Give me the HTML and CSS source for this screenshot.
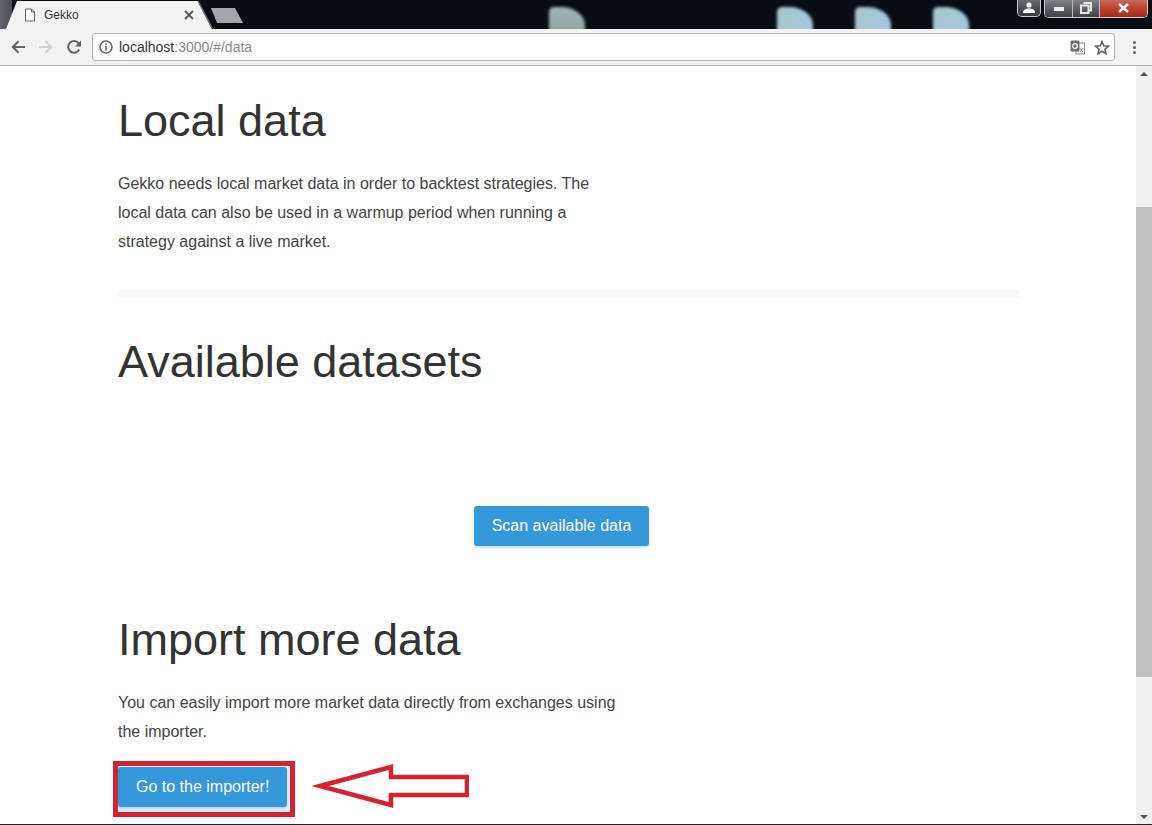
FILE: index.html
```html
<!DOCTYPE html>
<html lang="en">
<head>
<meta charset="utf-8">
<title>Gekko</title>
<link rel="stylesheet" href="styles.css">
</head>
<body>
<div class="browser">
  <header class="tabstrip">
    <div class="tab">
      <svg class="tab-shape" width="236" height="29" viewBox="0 0 236 29"><path d="M0 29H6L17 1H198L212 29Z" fill="#f2f2f2"/><path d="M198 1L212 28" stroke="#6d7175" stroke-width="1.5" fill="none"/></svg>
      <svg class="page-icon" width="12" height="14" viewBox="0 0 12 14"><path d="M1.500 1H7.500L10.500 4V13H1.500Z M7.500 1V4H10.500" fill="#fff" stroke="#5f6368" stroke-width="1"/></svg>
      <span class="tab-title">Gekko</span>
      <svg class="tab-close" width="10" height="10" viewBox="0 0 10 10"><path d="M1 1L9 9M9 1L1 9" stroke="#555" stroke-width="1.800"/></svg>
    </div>
    <svg class="newtab" width="34" height="16" viewBox="0 0 34 16"><path d="M0 0H24L32 15H6Z" fill="#a3a6a9"/></svg>
    <div class="blobs">
      <span class="blob blob-a"></span><span class="blob"></span><span class="blob"></span><span class="blob"></span>
    </div>
    <div class="winbtns">
      <div class="winbtn user"><svg width="14" height="11" viewBox="0 0 14 11"><circle cx="7" cy="3" r="2.600" fill="#fff"/><path d="M1 11C1 7.500 4 6.500 7 6.500S13 7.500 13 11Z" fill="#fff"/></svg></div>
      <div class="winctl">
        <div class="winbtn min"><span class="min-bar"></span></div>
        <div class="winbtn max"><svg width="12" height="12" viewBox="0 0 12 12"><path d="M3.500 1H11V8.500H8.500M1 3.500H8.500V11H1Z" fill="none" stroke="#e8e8e8" stroke-width="2"/></svg></div>
        <div class="winbtn close"><svg width="13" height="10" viewBox="0 0 13 10"><path d="M2 1L11 9M11 1L2 9" stroke="#fff" stroke-width="2.600"/></svg></div>
      </div>
    </div>
  </header>
  <nav class="toolbar">
    <svg class="nav-icon" width="14" height="14" viewBox="0 0 14 14"><path d="M14 7H2M7.500 1.300L1.800 7L7.500 12.700" fill="none" stroke="#5f6368" stroke-width="2"/></svg>
    <svg class="nav-icon" width="14" height="14" viewBox="0 0 14 14"><path d="M0 7H12M6.500 1.300L12.200 7L6.500 12.700" fill="none" stroke="#cfd1d3" stroke-width="2"/></svg>
    <svg class="nav-icon" width="14" height="14" viewBox="0 0 14 14"><path d="M12.300 9.300A5.800 5.800 0 1 1 11.800 3.600" fill="none" stroke="#5f6368" stroke-width="2"/><path d="M14 0.500V6.500H8Z" fill="#5f6368"/></svg>
    <div class="omnibox">
      <svg width="14" height="14" viewBox="0 0 14 14"><circle cx="7" cy="7" r="6" fill="none" stroke="#5f6368" stroke-width="1.500"/><rect x="6.200" y="6" width="1.600" height="4.500" fill="#5f6368"/><rect x="6.200" y="3.300" width="1.600" height="1.600" fill="#5f6368"/></svg>
      <span class="url"><span class="host">localhost</span>:3000/#/data</span>
      <svg class="translate" width="15" height="15" viewBox="0 0 15 15"><rect x="6" y="3" width="8.500" height="11" fill="#fff" stroke="#8a8a8a"/><rect x="0.500" y="0.500" width="9" height="11" rx="1" fill="#6b6f72"/><circle cx="5" cy="6" r="2.300" fill="none" stroke="#fff" stroke-width="1.200"/><path d="M9.500 8L13 12M13 8L10 12" stroke="#8a8a8a"/></svg>
      <svg class="star" width="16" height="15" viewBox="0 0 16 15"><path d="M8 1.500L9.800 5.800L14.500 6.200L11 9.200L12 13.700L8 11.300L4 13.700L5 9.200L1.500 6.200L6.200 5.800Z" fill="none" stroke="#5f6368" stroke-width="1.600"/></svg>
    </div>
    <div class="menu-dots"><i></i><i></i><i></i></div>
  </nav>
  <div class="viewport">
    <main class="page">
      <h1>Local data</h1>
      <p>Gekko needs local market data in order to backtest strategies. The local data can also be used in a warmup period when running a strategy against a live market.</p>
      <div class="rule"></div>
      <h1 class="datasets">Available datasets</h1>
      <div class="scan-row"><a class="btn">Scan available data</a></div>
      <h1 class="import">Import more data</h1>
      <p class="import-text">You can easily import more market data directly from exchanges using the importer.</p>
      <div class="importer-row">
        <div class="highlight"><a class="btn">Go to the importer!</a></div>
        <svg class="arrow" width="158" height="46" viewBox="0 0 158 46"><path d="M9 23L80 4V14H156V32H80V42Z" fill="#fff" stroke="#d3232e" stroke-width="4.500"/></svg>
      </div>
    </main>
    <aside class="scrollbar">
      <span class="arrow-up"></span>
      <div class="thumb-track"><div class="thumb"></div></div>
      <span class="arrow-down"></span>
    </aside>
  </div>
  <div class="bottom-line"></div>
</div>
</body>
</html>
```
FILE: styles.css
```css
* { box-sizing: border-box; }
html, body { margin: 0; height: 100%; overflow: hidden; }
body { font-family: "Liberation Sans", Arial, sans-serif; background: #fff; color: #333; }
.browser { width: 1152px; height: 825px; display: flex; flex-direction: column; }

.tabstrip { height: 29px; flex: none; background: #080d14; display: flex; position: relative; overflow: hidden; }
.tab { width: 211px; height: 29px; position: relative; flex: none; background: linear-gradient(90deg, #64686c 0, #4a4d52 12px, transparent 12px); display: flex; align-items: center; }
.tab-shape { position: absolute; left: 0; top: 0; }
.page-icon { position: relative; margin-left: 24px; margin-top: 1px; }
.tab-title { position: relative; font-size: 12px; color: #333; margin-left: 8px; }
.tab-close { position: relative; margin-left: 105px; }
.newtab { margin-top: 8px; flex: none; }
.blobs { display: flex; position: absolute; left: 549px; top: 7px; }
.blob { width: 36px; height: 30px; background: linear-gradient(135deg, #a9c7c4, #a2c6e8); border-radius: 5px 24px 0 0 / 5px 18px 0 0; filter: blur(1.500px); margin-right: 42px; }
.blob-a { background: linear-gradient(#9fb5b4, #8ea39f); margin-right: 192px; }
.winbtns { position: absolute; right: 0; top: -1px; display: flex; gap: 3px; padding-right: 4px; }
.winbtn { height: 18px; display: flex; align-items: center; justify-content: center; }
.user { width: 24px; border: 1px solid #c8c8c8; border-top: 0; border-radius: 0 0 5px 5px; background: linear-gradient(#6a6e72, #33373b); }
.winctl { display: flex; border: 1px solid #d0d0d0; border-top: 0; border-radius: 0 0 5px 5px; overflow: hidden; }
.min { width: 28px; background: linear-gradient(#83878a, #3d4044); border-right: 1px solid #bbb; }
.min-bar { width: 10px; height: 4px; background: #eee; margin-top: 1px; }
.max { width: 27px; background: linear-gradient(#83878a, #3d4044); border-right: 1px solid #bbb; }
.close { width: 47px; background: linear-gradient(#c96f62 0, #c23a22 60%, #9c3020); }

.toolbar { height: 37px; flex: none; background: #f2f2f2; border-bottom: 1px solid #b8babc; display: flex; align-items: center; gap: 14px; padding-left: 11px; }
.nav-icon { flex: none; }
.omnibox { width: 1023px; height: 28px; margin-left: -3px; background: #fff; border: 1px solid #b4b4b4; border-radius: 3px; display: flex; align-items: center; padding: 0 4px 0 6px; flex: none; }
.url { font-size: 14px; color: #8a8a8a; margin-left: 6px; flex: 1; }
.host { color: #333; }
.translate { margin-right: 9px; }
.menu-dots { margin-left: 4px; display: flex; flex-direction: column; gap: 2px; }
.menu-dots i { display: block; width: 3px; height: 3px; border-radius: 50%; background: #5f6368; }

.viewport { flex: 1; min-height: 0; display: flex; }
.page { width: 1136px; flex: none; padding: 26px 0 0 118px; }
h1 { margin: 0; font-size: 45px; font-weight: 400; line-height: 58px; color: #333; }
p { margin: 0; font-size: 16px; line-height: 29px; width: 500px; color: #444; }
.page > h1:first-child + p { margin-top: 19px; }
.rule { width: 901px; height: 8px; background: #f9f9f9; margin-top: 34px; }
.datasets { margin-top: 35px; }
.scan-row { width: 887px; display: flex; justify-content: center; margin-top: 115px; }
.btn { display: block; background: #3498db; color: #fff; font-size: 16px; line-height: 40px; height: 40px; padding: 0 18px; border-radius: 3px; box-shadow: 0 2px 3px rgba(52,152,219,.25); white-space: nowrap; }
.import { margin-top: 65px; }
.import-text { margin-top: 19px; }
.importer-row { display: flex; align-items: flex-start; margin-top: 15px; margin-left: -5px; }
.highlight { border: 5px solid #d3232e; padding: 1px 3px 5px 0; background: #e8eefa; }
.arrow { margin-left: 16px; margin-top: 2px; flex: none; }

.scrollbar { width: 16px; flex: none; background: #f1f1f1; display: flex; flex-direction: column; align-items: center; }
.arrow-up, .arrow-down { flex: none; width: 0; height: 0; border-left: 4px solid transparent; border-right: 4px solid transparent; }
.arrow-up { border-bottom: 4px solid #505050; margin-top: 6px; }
.arrow-down { border-top: 4px solid #505050; margin-bottom: 5px; }
.thumb-track { flex: 1; width: 100%; padding-top: 131px; padding-bottom: 138px; }
.thumb { height: 100%; background: #c1c1c1; }
.bottom-line { height: 1px; flex: none; background: #222; }
```
